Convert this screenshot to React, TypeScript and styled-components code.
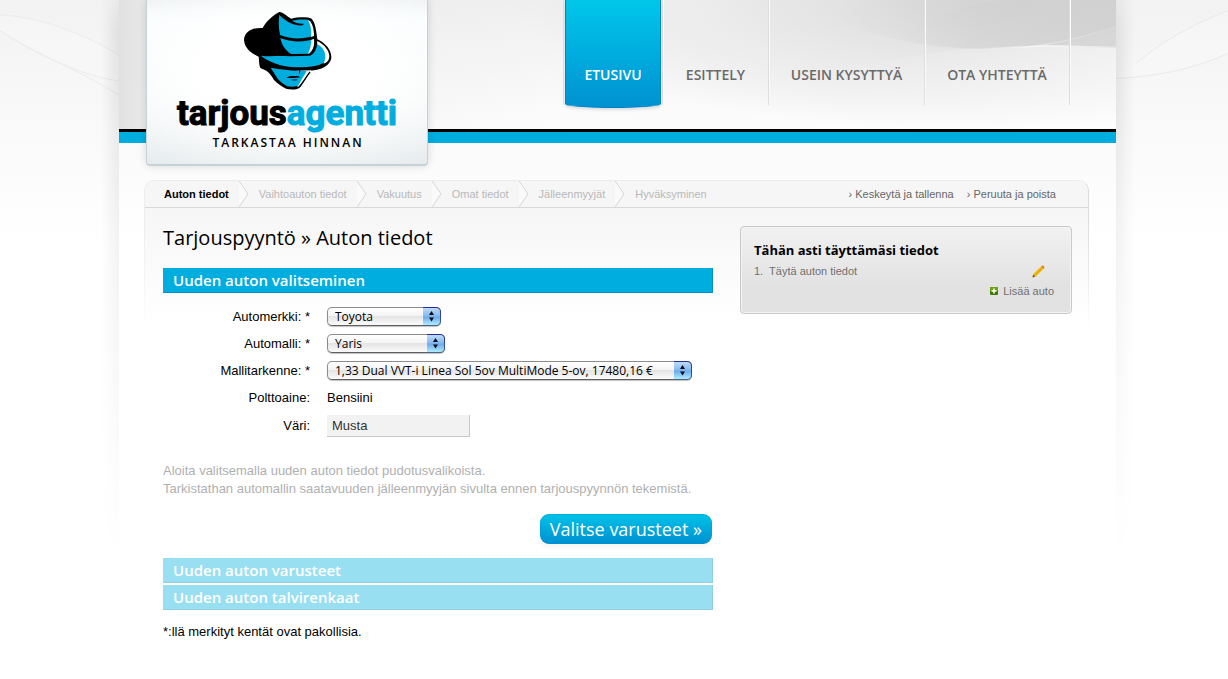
import React from "react";
import styled, { createGlobalStyle, css } from "styled-components";

const humanist = `"Open Sans", "Noto Sans", sans-serif`;
const grotesque = `"Liberation Sans", Arial, sans-serif`;

const GlobalStyle = createGlobalStyle`
  *, *::before, *::after { box-sizing: border-box; }
  html { background: #fff; }
  body { margin: 0; font: 13px/18px ${grotesque}; color: #000; }
  h1, h2, p, ol, ul { margin: 0; padding: 0; font-weight: inherit; }
  ol, ul { list-style: none; }
  a { color: inherit; text-decoration: none; }
`;

const Page = styled.div`
  position: relative;
  overflow: hidden;
  background: linear-gradient(#f2f2f2, #f7f7f7 80px, #fff 240px);
`;

const Wave = styled.svg<{ $side: "left" | "right" }>`
  position: absolute;
  top: 0;
  ${(p) => (p.$side === "left" ? "left: 0;" : "right: 0;")}
`;

const Frame = styled.div`
  position: relative;
  max-width: 1004px;
  margin: 0 auto;
  padding-left: 7px;
`;

const Sheet = styled.div`
  position: relative;
  background: linear-gradient(#fafafa 140px, #fff 240px);

  &::before {
    content: "";
    position: absolute;
    z-index: -1;
    inset: 0 -18px;
    background: linear-gradient(
      to right,
      transparent,
      rgba(0, 0, 0, 0.08) 18px,
      rgba(0, 0, 0, 0.08) calc(100% - 18px),
      transparent
    );
    mask-image: linear-gradient(rgba(0, 0, 0, 0.5), #000 30px, #000 60px, transparent 560px);
  }
`;

const Layer = styled.div`
  position: relative;
  z-index: 0;
`;

const Header = styled.header`
  position: relative;
  display: flex;
  align-items: flex-start;
  justify-content: space-between;
  height: 143px;
  padding: 0 46px 0 27px;
  background:
    linear-gradient(#000 3px, #00addf 3px) 0 129px / 100% 14px no-repeat,
    linear-gradient(to right, #e1e1e1, rgba(236, 236, 236, 0.6) 5%, rgba(240, 240, 240, 0) 45%),
    radial-gradient(ellipse 460px 130px at 86% 0, #d9d9d9, #ececec 60%, rgba(250, 250, 250, 0) 100%),
    linear-gradient(#efefef, #fdfdfd 129px);
`;

const HeaderWave = styled.svg`
  position: absolute;
  top: 0;
  right: 0;
`;

const LogoCard = styled.a`
  position: relative;
  display: block;
  width: 282px;
  height: 166px;
  border: solid #c5d2d6;
  border-width: 0 1px 2px;
  border-radius: 0 0 4px 4px;
  background:
    radial-gradient(ellipse 75% 70% at 50% 45%, #fff 40%, rgba(255, 255, 255, 0)),
    linear-gradient(#eef1f2, #f9fdfe 20px, #f5f8f9 60%, #e6ebed);
  box-shadow: 0 0 8px rgba(0, 0, 0, 0.14);

  svg { display: block; }
`;

const Nav = styled.nav`
  position: relative;
`;

const NavList = styled.ul`
  display: flex;
  border-left: 1px solid #e2e2e2;
`;

const NavItem = styled.li<{ $width: number }>`
  width: ${(p) => p.$width}px;
  height: 105px;
  border-right: 1px solid #dedede;
  box-shadow: 1px 0 #fafafa;
`;

const NavLink = styled.a<{ $active?: boolean }>`
  display: block;
  margin: 0 1px;
  height: 105px;
  padding-top: 65px;
  font: 600 14px/20px ${humanist};
  text-align: center;
  white-space: nowrap;
  color: #6a6a6a;
  ${(p) =>
    p.$active &&
    css`
      height: 108px;
      color: #fff;
      border: solid #0084c8;
      border-width: 0 1px 1px;
      border-radius: 0 0 50% 50% / 0 0 4px 4px;
      background: linear-gradient(#00c6e9, #00addf 50%, #0091d1);
      box-shadow: 0 2px 3px rgba(0, 0, 0, 0.12);
    `}
`;

const Main = styled.main`
  padding: 37px 27px 32px 25px;
`;

const Panel = styled.div`
  position: relative;
  border-radius: 10px 10px 0 0;
  background: linear-gradient(#f6f6f6 28px, #fff 140px);

  &::after {
    content: "";
    position: absolute;
    inset: 0;
    height: 150px;
    border: 1px solid #dcdcdc;
    border-left-color: #ededed;
    border-top-color: #ececec;
    border-bottom: 0;
    border-radius: 10px 10px 0 0;
    mask-image: linear-gradient(#000 40px, transparent);
    pointer-events: none;
  }
`;

const CrumbBar = styled.div`
  display: flex;
  justify-content: space-between;
  height: 28px;
  padding: 1px 33px 0 20px;
  border-bottom: 1px solid #d8d8d8;
  font-size: 11px;
  line-height: 26px;
`;

const Crumbs = styled.ol`
  display: flex;
`;

const Crumb = styled.li<{ $current?: boolean }>`
  display: flex;
  color: ${(p) => (p.$current ? "#000" : "#b9b9b9")};
  font-weight: ${(p) => (p.$current ? "bold" : "normal")};

  svg { margin: 0 10px; }
`;

const CrumbActions = styled.div`
  display: flex;
  gap: 13px;
  color: #666;
`;

const Columns = styled.div`
  display: flex;
  align-items: flex-start;
  justify-content: space-between;
  gap: 27px;
  padding: 18px 17px 0 19px;
`;

const Content = styled.section`
  flex: 0 1 550px;
`;

const Title = styled.h1`
  font: 400 20px/24px ${humanist};
`;

const SectionBar = styled.h2<{ $muted?: boolean }>`
  height: 25px;
  padding-left: 10px;
  border: solid ${(p) => (p.$muted ? "#8fcfe2" : "#0090cf")};
  border-width: 0 1px 1px 0;
  background: ${(p) => (p.$muted ? "#99dff2" : "#00addf")};
  color: #fff;
  font: 600 15px/24px ${humanist};
`;

const Form = styled.form`
  margin-top: 18px;
`;

const Fields = styled.div`
  display: grid;
  grid-template-columns: 147px 1fr;
  grid-template-rows: repeat(4, 27px) 29px;
  align-items: center;
  column-gap: 17px;
  margin-top: 10px;

  > label { text-align: right; }
`;

const SelectBox = styled.span<{ $width: number }>`
  position: relative;
  display: block;
  width: ${(p) => p.$width}px;
  height: 19px;

  select {
    appearance: none;
    display: block;
    width: 100%;
    height: 19px;
    padding: 0 20px 0 7px;
    border: 1px solid #8c8c8c;
    border-bottom-color: #5e5e5e;
    border-radius: 5px;
    background: linear-gradient(#fff, #f4f4f4 45%, #e4e4e4 50%, #fbfbfb);
    box-shadow: 0 1px 1px rgba(0, 0, 0, 0.25);
    color: #000;
    font: 12px/17px ${humanist};
  }

  svg {
    position: absolute;
    top: 0;
    right: 0;
    pointer-events: none;
  }
`;

const ColorInput = styled.input`
  width: 143px;
  height: 22px;
  padding: 0 5px;
  border: solid #c6c6c6;
  border-width: 0 1px 1px 0;
  background: #f2f2f2;
  color: #333;
  font: 13px/20px ${grotesque};
`;

const Help = styled.p`
  margin-top: 22px;
  color: #b0b0b0;
`;

const Actions = styled.div`
  display: flex;
  justify-content: flex-end;
  margin: 16px 1px 14px 0;
`;

const NextButton = styled.button`
  height: 30px;
  padding: 0 10px;
  border: 0;
  border-radius: 9px;
  background: linear-gradient(#00c3e8, #0090d0);
  box-shadow: inset 0 0 1px 1px rgba(0, 150, 210, 0.4), 0 4px 4px rgba(0, 0, 0, 0.04);
  color: #fff;
  font: 400 18px/30px ${humanist};
  white-space: nowrap;
`;

const Stack = styled.div`
  display: grid;
  gap: 2px;
  margin-bottom: 13px;
`;

const Summary = styled.aside`
  flex: 0 1 332px;
  height: 88px;
  padding: 13px 17px 0 13px;
  border: 1px solid #c9c9c9;
  border-radius: 4px;
  background: linear-gradient(#f1f1f1, #e2e2e2 60px);
  box-shadow: inset 0 0 0 1px #f3f3f3;
  color: #707070;
  font-size: 11px;
  line-height: 20px;
`;

const SummaryTitle = styled.h2`
  margin-bottom: 1px;
  color: #000;
  font: 700 13px/20px ${humanist};
`;

const SummaryRow = styled.div<{ $end?: boolean }>`
  display: flex;
  align-items: center;
  justify-content: ${(p) => (p.$end ? "flex-end" : "space-between")};
  padding-right: ${(p) => (p.$end ? 0 : 9)}px;

  a { display: flex; align-items: center; gap: 5px; }
`;

const Logo = () => (
  <svg width="280" height="164" role="img" aria-label="Tarjousagentti">
    <svg x="83" y="0" width="120" height="100" viewBox="0 0 360 300">
      <path d="M42 120C43 96 66 82 98 84C110 62 130 46 148 36C158 35 170 49 184 56C205 51 230 50 245 56C257 70 259 95 262 118C287 130 305 150 304 174C300 196 275 211 240 212C232 232 222 244 212 260C206 269 185 270 170 267C154 260 142 250 132 240C124 226 116 216 106 211L91 204C86 192 88 182 86 170C62 160 44 144 42 120Z" />
      <path fill="#00addf" d="M148 44C162 60 190 79 219 76L221 71C208 72 196 69 186 62C202 59 222 57 236 60C247 75 250 92 250 107C215 120 180 116 150 105C146 84 145 62 148 44Z" />
      <path fill="#00addf" d="M151 114C185 128 225 126 251 117C253 135 248 152 238 161L184 162C166 152 155 135 151 114Z" />
      <path fill="#fff" d="M234 61L241 64C250 78 252 94 252 108L243 111C245 92 242 74 234 61ZM244 120L252 117C254 138 249 154 234 161C241 148 243 135 244 120Z" />
      <path fill="#00addf" d="M93 167C115 170 145 167 180 169L240 167C253 162 261 148 262 124C282 136 297 153 296 172C289 192 258 201 215 202C170 203 125 193 93 167Z" />
      <path fill="#fff" d="M262 123C284 134 299 153 298 172C296 183 290 188 281 191C292 165 284 145 262 133Z" />
      <path fill="#fff" d="M200 212L244 211C232 230 222 244 210 258L202 260Z" />
      <path fill="#00addf" d="M122 203C150 208 180 211 206 212L230 212C224 226 213 238 206 256C200 261 182 261 172 259C160 252 150 244 143 236C136 224 129 214 122 203Z" />
      <path fill="none" stroke="#000" strokeWidth="4" d="M240 216C229 229 222 244 208 260" />
      <path d="M207 211L211 211L210 219L207 221ZM168 233C178 229 186 227 192 229C198 227 206 229 212 232C200 234 180 235 168 233ZM182 240C190 238 198 238 204 240C198 242 190 242 182 240Z" />
    </svg>
    <text
      x="140"
      y="125"
      textAnchor="middle"
      fontFamily="Roboto, sans-serif"
      fontWeight="700"
      fontSize="35"
      stroke="#000"
      strokeWidth="1"
    >
      tarjous
      <tspan fill="#00addf" stroke="#00addf">agentti</tspan>
    </text>
    <text
      x="141"
      y="147"
      textAnchor="middle"
      fontFamily="'Open Sans', sans-serif"
      fontWeight="600"
      fontSize="12"
      letterSpacing="2"
    >
      TARKASTAA HINNAN
    </text>
  </svg>
);

const HeaderCurves = () => (
  <HeaderWave width="276" height="129" viewBox="0 0 828 387" aria-hidden="true">
    <defs>
      <linearGradient id="fold" x1="0" y1="0" x2="1" y2="0">
        <stop offset="0" stopColor="#cacaca" stopOpacity="0" />
        <stop offset="0.5" stopColor="#cacaca" stopOpacity="0.6" />
        <stop offset="1" stopColor="#c8c8c8" stopOpacity="0.8" />
      </linearGradient>
      <linearGradient id="floor" x1="0" y1="0" x2="1" y2="0">
        <stop offset="0" stopColor="#fff" stopOpacity="0" />
        <stop offset="1" stopColor="#fff" stopOpacity="0.4" />
      </linearGradient>
      <linearGradient id="edge" x1="0" y1="0" x2="1" y2="0">
        <stop offset="0" stopColor="#f6f6f6" stopOpacity="0" />
        <stop offset="0.5" stopColor="#f6f6f6" />
        <stop offset="1" stopColor="#e6e6e6" />
      </linearGradient>
    </defs>
    <path fill="url(#floor)" d="M0 200C200 172 380 138 600 135L828 142V387H0Z" />
    <path fill="url(#fold)" d="M0 60C120 115 260 146 420 146C600 145 740 112 828 75V0H0Z" opacity="0.6" />
    <path fill="url(#fold)" d="M160 105C260 50 380 15 490 0H828V75C740 112 600 145 420 146C320 146 230 128 160 105Z" opacity="0.4" />
    <path fill="#c8c8c8" opacity="0.5" d="M620 134C700 122 770 100 828 75V140Z" />
    <path fill="none" stroke="url(#edge)" strokeWidth="4" d="M400 151C540 136 660 134 828 143" />
  </HeaderWave>
);

const CrumbArrow = () => (
  <svg width="10" height="26" viewBox="0 0 10 26" aria-hidden="true">
    <path d="M0 0L9 13L0 26" fill="#fafafa" stroke="#d6d6d6" />
  </svg>
);

const SelectCap = () => (
  <svg width="18" height="19" viewBox="0 0 18 19" aria-hidden="true">
    <defs>
      <linearGradient id="cap" x1="0" y1="0" x2="0" y2="1">
        <stop offset="0" stopColor="#c3dcf7" />
        <stop offset="0.48" stopColor="#83b9f0" />
        <stop offset="0.52" stopColor="#68aaec" />
        <stop offset="1" stopColor="#b5f0ff" />
      </linearGradient>
      <linearGradient id="rim" x1="0" y1="0" x2="0" y2="1">
        <stop offset="0" stopColor="#23309a" />
        <stop offset="1" stopColor="#4a6580" />
      </linearGradient>
    </defs>
    <path d="M0 0.5H13Q17.5 0.5 17.5 5V14Q17.5 18.5 13 18.5H0Z" fill="url(#cap)" />
    <path d="M0 0.5H13Q17.5 0.5 17.5 5V14Q17.5 18.5 13 18.5H0" fill="none" stroke="url(#rim)" />
    <path d="M8.5 4L11 8H6ZM8.5 14.5L11 10.5H6Z" fill="#0b0b18" />
  </svg>
);

const Pencil = () => (
  <svg width="13" height="13" viewBox="0 0 13 13" aria-hidden="true">
    <path d="M1.2 9L9 1.6L11.4 4L3.8 11.5L0.5 12.5Z" fill="#f0bd10" />
    <path d="M2.6 10.5L10.4 3" stroke="#d99a00" strokeWidth="1" />
    <path d="M9 1.6L10.2 0.5Q12.5 0.5 12.5 2.9L11.4 4Z" fill="#e2801c" />
    <path d="M1.2 9.6L0.4 12.6L3.4 11.6Z" fill="#7a5a28" />
  </svg>
);

const Plus = () => (
  <svg width="8" height="8" viewBox="0 0 8 8" aria-hidden="true">
    <rect width="8" height="8" rx="1" fill="#3f7a06" />
    <rect width="8" height="4" rx="1" fill="#6ba512" />
    <path d="M4 1.5V6.5M1.5 4H6.5" stroke="#fff" strokeWidth="1.5" />
  </svg>
);

const navItems = [
  { label: "ETUSIVU", width: 99, active: true },
  { label: "ESITTELY", width: 106 },
  { label: "USEIN KYSYTTYÄ", width: 156 },
  { label: "OTA YHTEYTTÄ", width: 145 },
];

const steps = ["Auton tiedot", "Vaihtoauton tiedot", "Vakuutus", "Omat tiedot", "Jälleenmyyjät", "Hyväksyminen"];

const selects = [
  { id: "merkki", label: "Automerkki: *", value: "Toyota", width: 114 },
  { id: "malli", label: "Automalli: *", value: "Yaris", width: 118 },
  { id: "tarkenne", label: "Mallitarkenne: *", value: "1,33 Dual VVT-i Linea Sol 5ov MultiMode 5-ov, 17480,16 €", width: 365 },
];

export default function App() {
  return (
    <Page>
      <GlobalStyle />
      <Wave $side="left" width="119" height="110" viewBox="0 0 357 330" fill="none" aria-hidden="true">
        <path d="M0 45C120 50 250 100 357 165V243C240 225 110 165 0 92Z" fill="#fff" fillOpacity="0.2" />
        <path d="M0 45C120 50 250 100 357 165M0 92C110 165 240 225 357 243M0 92C100 160 240 210 357 285" stroke="#ececec" strokeWidth="3" />
      </Wave>
      <Wave $side="right" width="112" height="90" viewBox="828 0 336 270" fill="none" aria-hidden="true">
        <path d="M828 235C960 230 1080 200 1164 160V32C1060 70 950 135 890 190" fill="#fff" fillOpacity="0.2" />
        <path d="M828 235C960 230 1080 200 1164 160M1164 32C1060 70 950 135 890 190" stroke="#eaeaea" strokeWidth="3" />
      </Wave>
      <Layer>
        <Frame>
          <Sheet>
            <Header>
              <HeaderCurves />
              <LogoCard href="#">
                <Logo />
              </LogoCard>
              <Nav>
                <NavList>
                  {navItems.map((item) => (
                    <NavItem key={item.label} $width={item.width}>
                      <NavLink href="#" $active={item.active}>
                        {item.label}
                      </NavLink>
                    </NavItem>
                  ))}
                </NavList>
              </Nav>
            </Header>
            <Main>
              <Panel>
                <CrumbBar>
                  <Crumbs>
                    {steps.map((step, i) => (
                      <Crumb key={step} $current={i === 0}>
                        {step}
                        {i < steps.length - 1 && <CrumbArrow />}
                      </Crumb>
                    ))}
                  </Crumbs>
                  <CrumbActions>
                    <a href="#">› Keskeytä ja tallenna</a>
                    <a href="#">› Peruuta ja poista</a>
                  </CrumbActions>
                </CrumbBar>
                <Columns>
                  <Content>
                    <Title>Tarjouspyyntö » Auton tiedot</Title>
                    <Form onSubmit={(e) => e.preventDefault()}>
                      <SectionBar>Uuden auton valitseminen</SectionBar>
                      <Fields>
                        {selects.map((s) => (
                          <React.Fragment key={s.id}>
                            <label htmlFor={s.id}>{s.label}</label>
                            <SelectBox $width={s.width}>
                              <select id={s.id}>
                                <option>{s.value}</option>
                              </select>
                              <SelectCap />
                            </SelectBox>
                          </React.Fragment>
                        ))}
                        <label htmlFor="polttoaine">Polttoaine:</label>
                        <output id="polttoaine">Bensiini</output>
                        <label htmlFor="vari">Väri:</label>
                        <ColorInput id="vari" defaultValue="Musta" />
                      </Fields>
                      <Help>
                        Aloita valitsemalla uuden auton tiedot pudotusvalikoista.
                        <br />
                        Tarkistathan automallin saatavuuden jälleenmyyjän sivulta ennen tarjouspyynnön tekemistä.
                      </Help>
                      <Actions>
                        <NextButton type="submit">Valitse varusteet »</NextButton>
                      </Actions>
                    </Form>
                    <Stack>
                      <SectionBar $muted>Uuden auton varusteet</SectionBar>
                      <SectionBar $muted>Uuden auton talvirenkaat</SectionBar>
                    </Stack>
                    <p>*:llä merkityt kentät ovat pakollisia.</p>
                  </Content>
                  <Summary>
                    <SummaryTitle>Tähän asti täyttämäsi tiedot</SummaryTitle>
                    <SummaryRow>
                      <span>1.&nbsp; Täytä auton tiedot</span>
                      <a href="#" aria-label="Muokkaa">
                        <Pencil />
                      </a>
                    </SummaryRow>
                    <SummaryRow $end>
                      <a href="#">
                        <Plus />
                        Lisää auto
                      </a>
                    </SummaryRow>
                  </Summary>
                </Columns>
              </Panel>
            </Main>
          </Sheet>
        </Frame>
      </Layer>
    </Page>
  );
}
